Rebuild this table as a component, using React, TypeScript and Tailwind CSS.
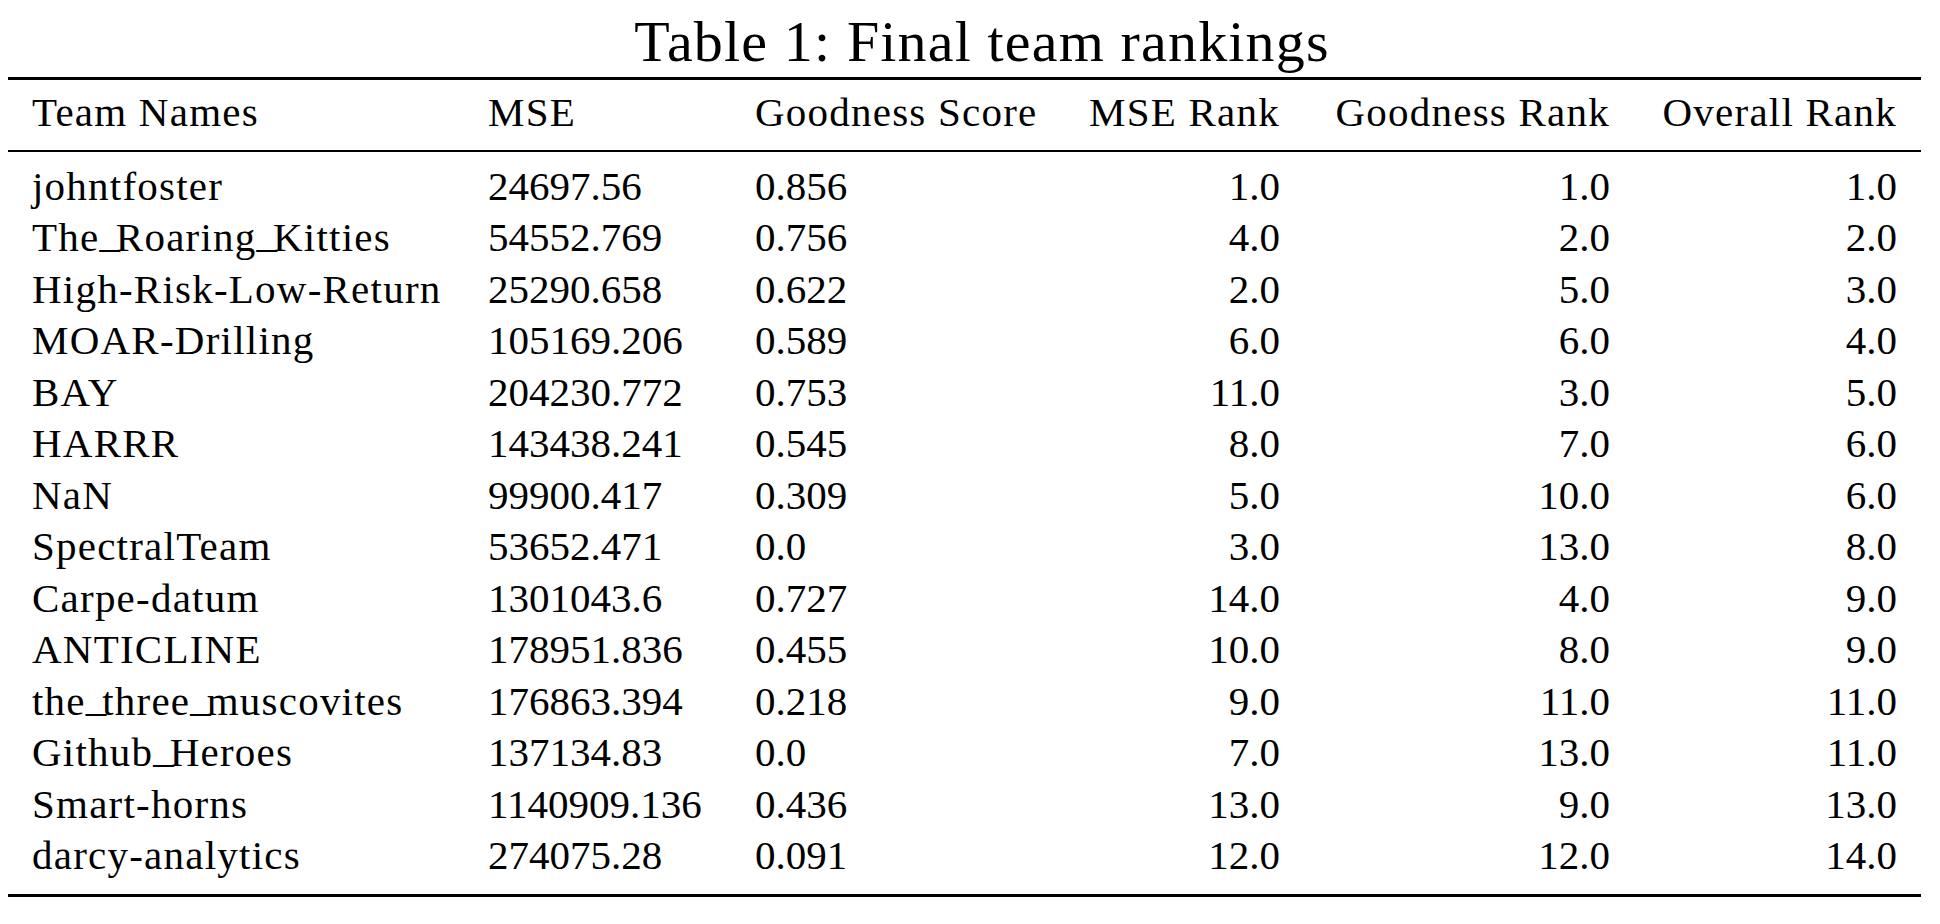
const rows: [string, string, string, string, string, string][] = [
  ['johntfoster', '24697.56', '0.856', '1.0', '1.0', '1.0'],
  ['The_Roaring_Kitties', '54552.769', '0.756', '4.0', '2.0', '2.0'],
  ['High-Risk-Low-Return', '25290.658', '0.622', '2.0', '5.0', '3.0'],
  ['MOAR-Drilling', '105169.206', '0.589', '6.0', '6.0', '4.0'],
  ['BAY', '204230.772', '0.753', '11.0', '3.0', '5.0'],
  ['HARRR', '143438.241', '0.545', '8.0', '7.0', '6.0'],
  ['NaN', '99900.417', '0.309', '5.0', '10.0', '6.0'],
  ['SpectralTeam', '53652.471', '0.0', '3.0', '13.0', '8.0'],
  ['Carpe-datum', '1301043.6', '0.727', '14.0', '4.0', '9.0'],
  ['ANTICLINE', '178951.836', '0.455', '10.0', '8.0', '9.0'],
  ['the_three_muscovites', '176863.394', '0.218', '9.0', '11.0', '11.0'],
  ['Github_Heroes', '137134.83', '0.0', '7.0', '13.0', '11.0'],
  ['Smart-horns', '1140909.136', '0.436', '13.0', '9.0', '13.0'],
  ['darcy-analytics', '274075.28', '0.091', '12.0', '12.0', '14.0'],
];

const grid = 'grid grid-cols-[456px_267px_329px_244px_330px_287px] leading-[51.5px]';

// LaTeX's \_ sits on the baseline, so lift the underscore a little
function TeamName({ name }: { name: string }) {
  const parts = name.split('_');
  return (
    <>
      {parts.map((p, i) => (
        <span key={i}>
          {i > 0 && <span className="relative top-[-4px] tracking-[-0.1em]">_</span>}
          {p}
        </span>
      ))}
    </>
  );
}

export default function App() {
  return (
    <div className="w-[1940px] h-[924px] bg-white text-black font-['Liberation_Serif',serif] overflow-hidden">
      <div className="pl-[24px] pt-[13px] text-center text-[58px] leading-[58px] tracking-[0.02em]">
        Table 1: Final team rankings
      </div>

      <div className="ml-[8px] mt-[6px] w-[1913px] border-t-[3px] border-b-[3px] border-black text-[41px] pb-[12px]">
        <div className={`${grid} pt-[7px] pb-[11px] border-b-2 border-black tracking-[0.03em]`}>
          <div className="px-[24px]">Team Names</div>
          <div className="px-[24px]">MSE</div>
          <div className="px-[24px] whitespace-nowrap">Goodness Score</div>
          <div className="px-[24px] text-right whitespace-nowrap">MSE Rank</div>
          <div className="px-[24px] text-right whitespace-nowrap">Goodness Rank</div>
          <div className="px-[24px] text-right whitespace-nowrap">Overall Rank</div>
        </div>

        <div className="pt-[9px]">
          {rows.map((r) => (
            <div key={r[0]} className={grid}>
              <div className="px-[24px] whitespace-nowrap tracking-[0.03em]">
                <TeamName name={r[0]} />
              </div>
              <div className="px-[24px]">{r[1]}</div>
              <div className="px-[24px]">{r[2]}</div>
              <div className="px-[24px] text-right">{r[3]}</div>
              <div className="px-[24px] text-right">{r[4]}</div>
              <div className="px-[24px] text-right">{r[5]}</div>
            </div>
          ))}
        </div>
      </div>
    </div>
  );
}
